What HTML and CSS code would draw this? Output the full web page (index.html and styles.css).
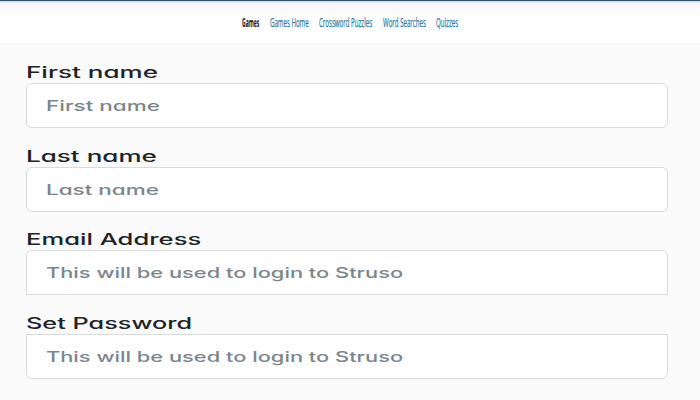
FILE: index.html
```html
<!DOCTYPE html>
<html lang="en">
<head>
<meta charset="utf-8">
<title>Struso</title>
<link rel="stylesheet" href="styles.css">
</head>
<body>
<header class="topbar">
<nav class="nav">
<strong class="item current"><span>Games</span></strong>
<a class="item home"><span>Games Home</span></a>
<a class="item crossword"><span>Crossword Puzzles</span></a>
<a class="item word"><span>Word Searches</span></a>
<a class="item quizzes"><span>Quizzes</span></a>
</nav>
</header>
<main class="form">
<section class="field first"><div class="label"><span>First name</span></div><div class="control"><span>First name</span></div></section>
<section class="field last"><div class="label"><span>Last name</span></div><div class="control"><span>Last name</span></div></section>
<section class="field email"><div class="label"><span>Email Address</span></div><div class="control"><span>This will be used to login to Struso</span></div></section>
<section class="field password"><div class="label"><span>Set Password</span></div><div class="control"><span>This will be used to login to Struso</span></div></section>
</main>
</body>
</html>
```
FILE: styles.css
```css
* { box-sizing: border-box; }
body { margin: 0; height: 400px; overflow: hidden; background: #fafafa; }
span { display: inline-block; white-space: nowrap; transform-origin: left center; }

.topbar {
  height: 43px;
  border-top: 1px solid #34506f;
  background: linear-gradient(#c9d3e2 0, #f4f4f6 2px, #fafafa 8px, #fff 18px);
}
.nav {
  display: flex;
  gap: 11px;
  padding: 11px 0 0 241.5px;
  font: 13px/20px "Open Sans", sans-serif;
  color: #2479a0;
}
.item { flex: none; height: 20px; }
.current { width: 17.5px; font-size: 11.5px; line-height: 22px; color: #111; }
.current span { transform: scaleX(.44); }
.home { width: 38.5px; }
.crossword { width: 52.5px; }
.word { width: 42.5px; }
.quizzes { width: 22px; }
.item:not(.current) { position: relative; left: -.5px; -webkit-text-stroke: .25px currentColor; }
.home span { transform: scaleX(.47); }
.crossword span { transform: scaleX(.47); }
.word span { transform: scaleX(.47); }
.quizzes span { transform: scaleX(.47); }

.form { padding: 19px 32px 0 26px; }
.field { height: 83.6px; font-family: Inter, "Open Sans", sans-serif; font-feature-settings: "cv11"; }
.label { height: 21px; font-size: 15.5px; line-height: 22px; font-weight: 450; color: #202326; }
.label span { transform: scaleX(1.68); }
.email .label span { transform: scaleX(1.65); }
.password .label span { transform: scaleX(1.63); }
.control {
  height: 45px;
  padding-left: 18.5px;
  border: 1px solid #d9dadc;
  border-radius: 6px;
  background: #fff;
  color: #7b858c;
  font-size: 14.5px;
  line-height: 43px;
  font-weight: 500;
}
.control span { transform: scaleX(1.55); }
.email .control span, .password .control span { transform: scaleX(1.505); }
.email .control { border-radius: 6px 6px 0 0; }
.password .control { border-radius: 0 0 6px 6px; }
```
